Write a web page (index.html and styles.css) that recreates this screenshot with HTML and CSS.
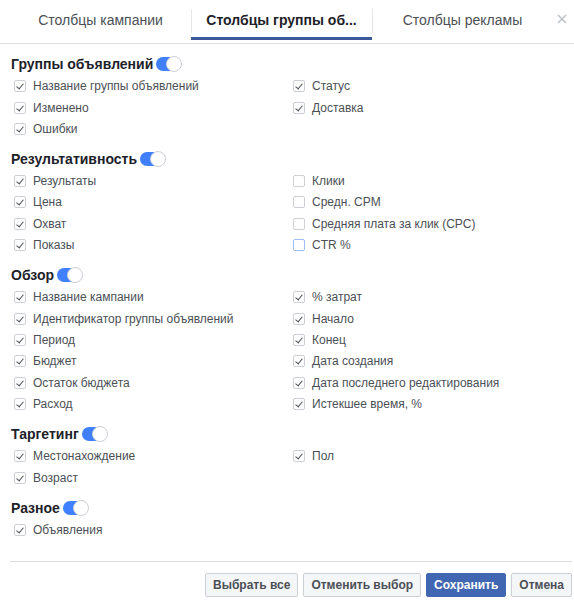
FILE: index.html
```html
<!DOCTYPE html>
<html lang="ru">
<head>
<meta charset="utf-8">
<title>Столбцы</title>
<link rel="stylesheet" href="styles.css">
</head>
<body>
<div class="dialog">
  <div class="tabs">
    <div class="tab">Столбцы кампании</div>
    <div class="tab active">Столбцы группы об...</div>
    <div class="tab">Столбцы рекламы</div>
    <div class="close"><svg width="10" height="10" viewBox="0 0 10 10"><path d="M1 1L9 9M9 1L1 9" stroke="#bec3c9" stroke-width="1.6" fill="none"/></svg></div>
  </div>

  <div class="content">
    <section class="group">
      <h3 class="group-title">Группы объявлений <span class="toggle"><span class="knob"></span></span></h3>
      <div class="rows">
        <label class="item"><span class="cb on"></span>Название группы объявлений</label>
        <label class="item"><span class="cb on"></span>Статус</label>
        <label class="item"><span class="cb on"></span>Изменено</label>
        <label class="item"><span class="cb on"></span>Доставка</label>
        <label class="item"><span class="cb on"></span>Ошибки</label>
      </div>
    </section>

    <section class="group">
      <h3 class="group-title">Результативность <span class="toggle"><span class="knob"></span></span></h3>
      <div class="rows">
        <label class="item"><span class="cb on"></span>Результаты</label>
        <label class="item"><span class="cb"></span>Клики</label>
        <label class="item"><span class="cb on"></span>Цена</label>
        <label class="item"><span class="cb"></span>Средн. CPM</label>
        <label class="item"><span class="cb on"></span>Охват</label>
        <label class="item"><span class="cb"></span>Средняя плата за клик (CPC)</label>
        <label class="item"><span class="cb on"></span>Показы</label>
        <label class="item"><span class="cb focus"></span>CTR %</label>
      </div>
    </section>

    <section class="group">
      <h3 class="group-title">Обзор <span class="toggle"><span class="knob"></span></span></h3>
      <div class="rows">
        <label class="item"><span class="cb on"></span>Название кампании</label>
        <label class="item"><span class="cb on"></span>% затрат</label>
        <label class="item"><span class="cb on"></span>Идентификатор группы объявлений</label>
        <label class="item"><span class="cb on"></span>Начало</label>
        <label class="item"><span class="cb on"></span>Период</label>
        <label class="item"><span class="cb on"></span>Конец</label>
        <label class="item"><span class="cb on"></span>Бюджет</label>
        <label class="item"><span class="cb on"></span>Дата создания</label>
        <label class="item"><span class="cb on"></span>Остаток бюджета</label>
        <label class="item"><span class="cb on"></span>Дата последнего редактирования</label>
        <label class="item"><span class="cb on"></span>Расход</label>
        <label class="item"><span class="cb on"></span>Истекшее время, %</label>
      </div>
    </section>

    <section class="group">
      <h3 class="group-title">Таргетинг <span class="toggle"><span class="knob"></span></span></h3>
      <div class="rows">
        <label class="item"><span class="cb on"></span>Местонахождение</label>
        <label class="item"><span class="cb on"></span>Пол</label>
        <label class="item"><span class="cb on"></span>Возраст</label>
      </div>
    </section>

    <section class="group">
      <h3 class="group-title">Разное <span class="toggle"><span class="knob"></span></span></h3>
      <div class="rows">
        <label class="item"><span class="cb on"></span>Объявления</label>
      </div>
    </section>
  </div>

  <div class="footer">
    <button class="btn">Выбрать все</button>
    <button class="btn">Отменить выбор</button>
    <button class="btn primary">Сохранить</button>
    <button class="btn">Отмена</button>
  </div>
</div>
</body>
</html>
```

FILE: styles.css
```css
* { box-sizing: border-box; }
html, body {
  margin: 0;
  padding: 0;
  background: #fff;
}
body {
  font-family: "Liberation Sans", Arial, Helvetica, sans-serif;
  color: #4b4f56;
  width: 574px;
  height: 604px;
  overflow: hidden;
}
.dialog {
  display: flex;
  flex-direction: column;
  height: 604px;
}
.tabs {
  display: flex;
  align-items: stretch;
  height: 44px;
  padding: 0 0 0 10px;
  border-bottom: 1px solid #dddfe2;
}
.tab {
  position: relative;
  width: 181px;
  flex: none;
  display: flex;
  align-items: center;
  justify-content: center;
  font-size: 14px;
  color: #4b4f56;
  padding-bottom: 4px;
}
.tab + .tab::before {
  content: "";
  position: absolute;
  left: 0;
  top: 9px;
  height: 24px;
  width: 1px;
  background: #e5e6e9;
}
.tab.active {
  font-weight: bold;
  color: #1d2129;
}
.tab.active::after {
  content: "";
  position: absolute;
  left: 0;
  right: 0;
  bottom: 3px;
  height: 3px;
  background: #3b5998;
}
.close {
  flex: 1;
  display: flex;
  align-items: center;
  justify-content: center;
  padding-bottom: 6px;
  padding-right: 4px;
}
.content {
  flex: 1;
  padding: 9px 0 0 11px;
}
.group { margin: 0 0 8px 0; }
.group-title {
  margin: 0;
  height: 22.6px;
  display: flex;
  align-items: center;
  font-size: 14px;
  font-weight: bold;
  color: #1d2129;
}
.toggle {
  position: relative;
  display: inline-block;
  width: 25px;
  height: 14px;
  margin-left: 3px;
  border-radius: 7px;
  background: #4080ff;
}
.knob {
  position: absolute;
  right: -1px;
  top: -1px;
  width: 16px;
  height: 16px;
  border-radius: 50%;
  background: #fff;
  border: 1px solid #ccd0d5;
}
.rows {
  display: grid;
  grid-template-columns: 279px 1fr;
  grid-auto-rows: 21.4px;
  padding-left: 3px;
}
.item {
  display: flex;
  align-items: center;
  font-size: 12px;
  color: #4b4f56;
  white-space: nowrap;
}
.cb {
  width: 12px;
  height: 12px;
  flex: none;
  border: 1px solid #ccd0d5;
  border-radius: 2px;
  background: #fff;
  margin-right: 7px;
  position: relative;
}
.cb.on::after {
  content: "";
  position: absolute;
  left: 3px;
  top: 1px;
  width: 3px;
  height: 6px;
  border-right: 1.8px solid #4b4f56;
  border-bottom: 1.8px solid #4b4f56;
  transform: rotate(40deg);
}
.cb.focus { border-color: #a3bef5; }
.footer {
  margin: 0 2px 0 10px;
  border-top: 1px solid #dddfe2;
  padding: 11px 0 7px 0;
  display: flex;
  justify-content: flex-end;
  gap: 5px;
}
.btn {
  height: 24px;
  padding: 0 7px;
  font-family: "Liberation Sans", Arial, Helvetica, sans-serif;
  font-size: 12px;
  font-weight: bold;
  color: #4b4f56;
  background: #f5f6f7;
  border: 1px solid #ccd0d5;
  border-radius: 2px;
}
.btn.primary {
  background: #4267b2;
  border-color: #4267b2;
  color: #fff;
}
```
